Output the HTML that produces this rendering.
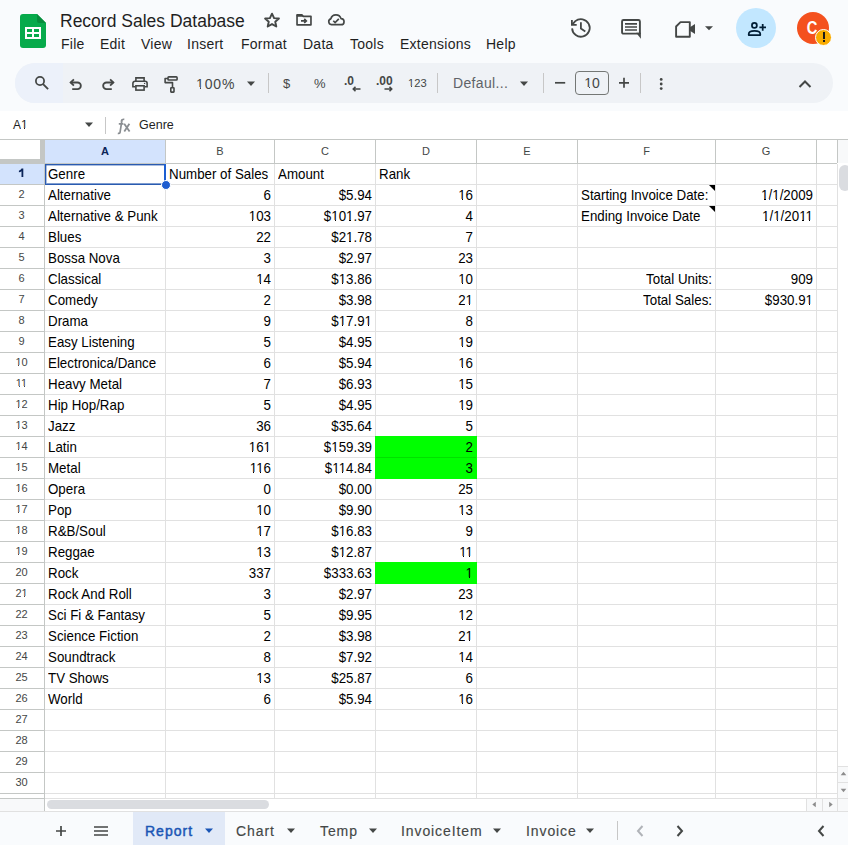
<!DOCTYPE html><html><head><meta charset="utf-8">
<style>
*{box-sizing:border-box;margin:0;padding:0}
html,body{width:848px;height:845px;overflow:hidden;background:#f9fbfd;font-family:"Liberation Sans",sans-serif;color:#1f1f1f}
.a{position:absolute}
.hl{position:absolute;height:1px}
.vl{position:absolute;width:1px}
.c{position:absolute;height:20px;line-height:21px;font-size:13.33px;color:#000;transform:scaleY(1.08);transform-origin:0 15px;white-space:nowrap;overflow:visible}
.l{padding-left:3px}
.r{text-align:right;padding-right:3px}
.ch{position:absolute;top:140px;height:23px;line-height:23px;font-size:11px;color:#444746;text-align:center}
.rh{position:absolute;left:0;width:43px;height:20px;line-height:18px;font-size:11px;color:#444746;text-align:center}
.menu{position:absolute;top:34px;font-size:14px;line-height:20px;letter-spacing:0.25px;color:#1f1f1f}
.tab{position:absolute;top:812px;height:33px;line-height:39px;font-size:14px;letter-spacing:0.9px;color:#444746;-webkit-text-stroke:0.15px #444746}
svg{position:absolute;overflow:visible}
</style></head><body>

<svg style="left:20px;top:14px" width="26" height="34" viewBox="0 0 26 34">
<path d="M3 0H17L26 9V31A3 3 0 0 1 23 34H3A3 3 0 0 1 0 31V3A3 3 0 0 1 3 0Z" fill="#07aa4b"></path>
<path d="M17 0L26 9H19A2 2 0 0 1 17 7Z" fill="#078c3c"></path>
<rect x="5" y="13" width="16" height="12" fill="#fff"></rect>
<rect x="7" y="15" width="5" height="3" fill="#07aa4b"></rect><rect x="14" y="15" width="5" height="3" fill="#07aa4b"></rect>
<rect x="7" y="20" width="5" height="3" fill="#07aa4b"></rect><rect x="14" y="20" width="5" height="3" fill="#07aa4b"></rect>
</svg>
<div class="a" style="left:60px;top:9px;font-size:17.5px;line-height:24px;color:#1f1f1f">Record Sales Database</div>

<svg style="left:262px;top:10px" width="20" height="20" viewBox="0 0 24 24"><path d="M12 4.4l2.5 5.3 5.8.55-4.4 3.9 1.25 5.7L12 16.9l-5.15 2.95 1.25-5.7-4.4-3.9 5.8-.55z" fill="none" stroke="#444746" stroke-width="2.3" stroke-linejoin="round"></path></svg>
<svg style="left:294px;top:10px" width="20" height="20" viewBox="0 0 24 24"><path d="M3.64 5.9H9.5L11.2 7.6H20.36V17.84H3.64Z" fill="none" stroke="#444746" stroke-width="2" stroke-linejoin="round"></path><path d="M3.64 5.9H9.5L11.2 7.6H3.64Z" fill="#444746" stroke="#444746" stroke-width="1"></path><path d="M8.4 13.1H14M12.3 10.6L14.8 13.1 12.3 15.6" fill="none" stroke="#444746" stroke-width="2"></path></svg>
<svg style="left:326px;top:10px" width="20" height="20" viewBox="0 0 24 24"><path d="M6.5 17.6A3.6 3.6 0 0 1 5.8 10.6A6.37 6.37 0 0 1 18 10.3A3.65 3.65 0 0 1 18 17.6Z" fill="none" stroke="#444746" stroke-width="2" stroke-linejoin="round"></path><path d="M8.76 12.9L10.9 15.1 15.4 10.6" fill="none" stroke="#444746" stroke-width="2"></path></svg>

<div class="menu" style="left:61px">File</div>
<div class="menu" style="left:100px">Edit</div>
<div class="menu" style="left:141px">View</div>
<div class="menu" style="left:187px">Insert</div>
<div class="menu" style="left:241px">Format</div>
<div class="menu" style="left:303px">Data</div>
<div class="menu" style="left:350px">Tools</div>
<div class="menu" style="left:400px">Extensions</div>
<div class="menu" style="left:486px">Help</div>
<svg style="left:566px;top:14px" width="30" height="30" viewBox="0 0 30 30"><path d="M6.1 14.4A8.8 8.8 0 1 0 9.3 7.1L6.4 10.3" fill="none" stroke="#444746" stroke-width="1.8"></path><path d="M5.9 5.9V10.9H10.7" fill="none" stroke="#444746" stroke-width="1.8"></path><path d="M14.9 8.2V14.6L19.3 17.5" fill="none" stroke="#444746" stroke-width="1.8"></path></svg>
<svg style="left:616px;top:14px" width="30" height="30" viewBox="0 0 30 30"><path d="M23.9 19.65V7.45A1.5 1.5 0 0 0 22.4 5.95H7.55A1.5 1.5 0 0 0 6.05 7.45V18.15A1.5 1.5 0 0 0 7.55 19.65H23.9" fill="none" stroke="#444746" stroke-width="1.9"></path><path d="M20.2 18.7H24.85V24.7Z" fill="#444746"></path><path d="M9 9.9H21M9 13H21M9 16H21" stroke="#444746" stroke-width="1.6"></path></svg>
<svg style="left:673px;top:17px" width="24" height="24" viewBox="0 0 24 24"><path d="M7.5 5.1H16.8V19.8H3.1V9.5Z" fill="none" stroke="#444746" stroke-width="1.9" stroke-linejoin="round"></path><path d="M16.5 10.5L22 7V17L16.5 13.5Z" fill="#444746"></path></svg>
<svg style="left:704px;top:26px" width="10" height="6" viewBox="0 0 10 6"><path d="M1 0.2h8L5 4.2z" fill="#444746"></path></svg>
<div class="a" style="left:736px;top:8px;width:40px;height:40px;border-radius:50%;background:#c2e7ff"></div>
<svg style="left:746px;top:18px" width="22" height="20" viewBox="0 0 22 20"><circle cx="8.4" cy="7.4" r="2.45" fill="none" stroke="#001d35" stroke-width="1.75"></circle><path d="M2.75 17.05V16C2.75 14 5.5 12.85 8.5 12.85S14.25 14 14.25 16V17.05Z" fill="none" stroke="#001d35" stroke-width="1.75" stroke-linejoin="round"></path><path d="M16.7 6.1V12.7M13.4 9.4H20" stroke="#001d35" stroke-width="1.75"></path></svg>
<div class="a" style="left:797px;top:12px;width:32px;height:32px;border-radius:50%;background:#f4511e"></div><div class="a" style="left:797px;top:12px;width:30px;height:32px;color:#fff;font-size:18px;font-weight:bold;line-height:32px;text-align:center;transform:scaleX(0.82)">C</div>
<div class="a" style="left:815px;top:29px;width:17px;height:17px;border-radius:50%;background:#f9ab00;border:1.5px solid #fff"></div>
<div class="a" style="left:823px;top:32px;width:2px;height:7px;background:#1a1a1a"></div>
<div class="a" style="left:823px;top:40px;width:2px;height:2px;background:#1a1a1a"></div>

<div class="a" style="left:15px;top:63px;width:818px;height:40px;border-radius:24px;background:#eff2f6"></div>
<div class="a" style="left:15px;top:63px;width:48px;height:40px;border-radius:24px 0 0 24px;background:#ecf1fa"></div>
<svg style="left:33px;top:75px" width="18" height="18" viewBox="0 0 18 18"><circle cx="7" cy="6" r="4.1" fill="none" stroke="#444746" stroke-width="1.75"></circle><path d="M10.1 9.1L15.1 14.1" stroke="#444746" stroke-width="1.9"></path></svg>
<svg style="left:68px;top:77px" width="16" height="16" viewBox="0 0 16 16"><path d="M2.6 5.5H9.5A3.35 3.35 0 0 1 9.5 12.2H4.2" fill="none" stroke="#444746" stroke-width="1.8"></path><path d="M5.9 2.3L2.6 5.5 5.9 8.7" fill="none" stroke="#444746" stroke-width="1.8"></path></svg>
<svg style="left:100px;top:77px" width="16" height="16" viewBox="0 0 16 16"><path d="M13.4 5.5H6.5A3.35 3.35 0 0 0 6.5 12.2H11.8" fill="none" stroke="#444746" stroke-width="1.8"></path><path d="M10.1 2.3L13.4 5.5 10.1 8.7" fill="none" stroke="#444746" stroke-width="1.8"></path></svg>
<svg style="left:128px;top:72px" width="24" height="24" viewBox="0 0 24 24"><path d="M7.9 9.3V5.9H16.1V9.3" fill="none" stroke="#444746" stroke-width="1.6"></path><path d="M7.3 14.8H4.9V11.3A2 2 0 0 1 6.9 9.3H17.1A2 2 0 0 1 19.1 11.3V14.8H16.7" fill="none" stroke="#444746" stroke-width="1.6"></path><rect x="7.9" y="13.8" width="8.2" height="4.3" fill="none" stroke="#444746" stroke-width="1.6"></rect><circle cx="16.6" cy="11.4" r="0.7" fill="#444746"></circle></svg>
<svg style="left:159px;top:72px" width="24" height="24" viewBox="0 0 24 24"><rect x="9" y="4.9" width="9.1" height="3.1" rx="0.8" fill="none" stroke="#444746" stroke-width="1.6"></rect><path d="M9 6.5H6.1V10.6H13.5V15" fill="none" stroke="#444746" stroke-width="1.6" stroke-linejoin="round"></path><rect x="11.8" y="15.8" width="3.2" height="4.3" rx="0.5" fill="none" stroke="#444746" stroke-width="1.6"></rect></svg>
<div class="a m1" style="left: 196px; top: 74px; font-size: 14px; line-height: 20px; letter-spacing: 0.9px; color: rgb(68, 71, 70);">100%<b style="position:absolute;left:-0.14px;top:13.45px;width:3.67px;height:1.54px;background:#eff2f6"></b><b style="position:absolute;left:4.73px;top:13.45px;width:3.15px;height:1.54px;background:#eff2f6"></b></div>
<svg style="left:246px;top:81px" width="10" height="6" viewBox="0 0 10 6"><path d="M1 0.5h8L5 5z" fill="#444746"></path></svg>
<div class="a" style="left:268px;top:73px;width:1px;height:20px;background:#c7c7c7"></div>
<div class="a" style="left:283px;top:74px;font-size:13px;line-height:20px;color:#444746">$</div>
<div class="a" style="left:314px;top:74px;font-size:13px;line-height:20px;color:#444746">%</div>
<div class="a" style="left:344px;top:71px;font-size:12px;line-height:20px;color:#444746;font-weight:bold">.0</div>
<svg style="left:352px;top:86px" width="9" height="6" viewBox="0 0 9 6"><path d="M8.5 3H1.5M3.5 0.8L1.3 3 3.5 5.2" fill="none" stroke="#444746" stroke-width="1.6"></path></svg>
<div class="a" style="left:376px;top:71px;font-size:12px;line-height:20px;color:#444746;font-weight:bold">.00</div>
<svg style="left:384px;top:86px" width="9" height="6" viewBox="0 0 9 6"><path d="M0.5 3H7.5M5.5 0.8L7.7 3 5.5 5.2" fill="none" stroke="#444746" stroke-width="1.6"></path></svg>
<div class="a m1" style="left: 408px; top: 72.5px; font-size: 11.2px; line-height: 20px; color: rgb(68, 71, 70);">123<b style="position:absolute;left:-0.11px;top:13.16px;width:2.93px;height:1.23px;background:#eff2f6"></b><b style="position:absolute;left:3.79px;top:13.16px;width:2.52px;height:1.23px;background:#eff2f6"></b></div>
<div class="a" style="left:437px;top:73px;width:1px;height:20px;background:#c7c7c7"></div>
<div class="a" style="left:453px;top:73px;font-size:14px;line-height:20px;letter-spacing:0.35px;color:#5f6368">Defaul...</div>
<svg style="left:519px;top:81px" width="10" height="6" viewBox="0 0 10 6"><path d="M1 0.5h8L5 5z" fill="#444746"></path></svg>
<div class="a" style="left:543px;top:73px;width:1px;height:20px;background:#c7c7c7"></div>
<svg style="left:553px;top:76px" width="14" height="14" viewBox="0 0 14 14"><path d="M2 6.8H12.2" stroke="#444746" stroke-width="1.7"></path></svg>
<div class="a m1" style="left: 575px; top: 71px; width: 34px; height: 24px; border: 1px solid rgb(116, 119, 117); border-radius: 4px; font-size: 14px; line-height: 22px; text-align: center; color: rgb(68, 71, 70);">10<b style="position:absolute;left:9.06px;top:15.45px;width:3.67px;height:1.54px;background:#eff2f6"></b><b style="position:absolute;left:13.94px;top:15.45px;width:3.15px;height:1.54px;background:#eff2f6"></b></div>
<svg style="left:617px;top:76px" width="14" height="14" viewBox="0 0 14 14"><path d="M2 6.8H12M7 1.8V11.8" stroke="#444746" stroke-width="1.7"></path></svg>
<div class="a" style="left:640px;top:73px;width:1px;height:20px;background:#c7c7c7"></div>
<svg style="left:656px;top:76px" width="10" height="16" viewBox="0 0 10 16"><circle cx="5.2" cy="3.4" r="1.4" fill="#444746"></circle><circle cx="5.2" cy="8" r="1.4" fill="#444746"></circle><circle cx="5.2" cy="12.6" r="1.4" fill="#444746"></circle></svg>
<svg style="left:798px;top:80px" width="14" height="8" viewBox="0 0 14 8"><path d="M1.5 7L7 1.5 12.5 7" fill="none" stroke="#444746" stroke-width="2"></path></svg>

<div class="a" style="left:0;top:111px;width:848px;height:28px;background:#fff"></div>
<div class="a m1" style="left: 13px; top: 115px; font-size: 12px; line-height: 20px; color: rgb(31, 31, 31);">A1<b style="position:absolute;left:7.88px;top:12.82px;width:3.14px;height:1.32px;background:#ffffff"></b><b style="position:absolute;left:12.06px;top:12.82px;width:2.70px;height:1.32px;background:#ffffff"></b></div>
<svg style="left:84px;top:122px" width="10" height="6" viewBox="0 0 10 6"><path d="M1 0.5h8L5 5z" fill="#444746"></path></svg>
<div class="a" style="left:105px;top:117px;width:1px;height:17px;background:#c7c7c7"></div>
<svg style="left:115px;top:118px" width="17" height="16" viewBox="0 0 17 16"><path d="M6.2 3.6C6.6 1.8 7.6 1.1 9.3 1.3M7 1.8L5 14.6C4.7 15.3 4 15.5 2.8 15.3M3.8 5.9H8.4" fill="none" stroke="#8a8e92" stroke-width="1.7"></path><path d="M9.2 5.8L14.6 13.6M14.4 5.8L9.3 13.6" fill="none" stroke="#8a8e92" stroke-width="1.8"></path></svg>
<div class="a" style="left:139px;top:115px;font-size:12.5px;line-height:20px;color:#1f1f1f">Genre</div>

<div class="a" style="left:0;top:139px;width:848px;height:672px;background:#fff"></div>
<div class="a" style="left:45px;top:140px;width:120px;height:23px;background:#d3e3fd"></div>
<div class="a" style="left:0;top:164px;width:44px;height:20px;background:#d3e3fd"></div>
<div class="hl" style="left:0;top:184px;width:44px;background:#c4c7c5"></div>
<div class="hl" style="left:45px;top:184px;width:792px;background:#e1e1e1"></div>
<div class="hl" style="left:0;top:205px;width:44px;background:#c4c7c5"></div>
<div class="hl" style="left:45px;top:205px;width:792px;background:#e1e1e1"></div>
<div class="hl" style="left:0;top:226px;width:44px;background:#c4c7c5"></div>
<div class="hl" style="left:45px;top:226px;width:792px;background:#e1e1e1"></div>
<div class="hl" style="left:0;top:247px;width:44px;background:#c4c7c5"></div>
<div class="hl" style="left:45px;top:247px;width:792px;background:#e1e1e1"></div>
<div class="hl" style="left:0;top:268px;width:44px;background:#c4c7c5"></div>
<div class="hl" style="left:45px;top:268px;width:792px;background:#e1e1e1"></div>
<div class="hl" style="left:0;top:289px;width:44px;background:#c4c7c5"></div>
<div class="hl" style="left:45px;top:289px;width:792px;background:#e1e1e1"></div>
<div class="hl" style="left:0;top:310px;width:44px;background:#c4c7c5"></div>
<div class="hl" style="left:45px;top:310px;width:792px;background:#e1e1e1"></div>
<div class="hl" style="left:0;top:331px;width:44px;background:#c4c7c5"></div>
<div class="hl" style="left:45px;top:331px;width:792px;background:#e1e1e1"></div>
<div class="hl" style="left:0;top:352px;width:44px;background:#c4c7c5"></div>
<div class="hl" style="left:45px;top:352px;width:792px;background:#e1e1e1"></div>
<div class="hl" style="left:0;top:373px;width:44px;background:#c4c7c5"></div>
<div class="hl" style="left:45px;top:373px;width:792px;background:#e1e1e1"></div>
<div class="hl" style="left:0;top:394px;width:44px;background:#c4c7c5"></div>
<div class="hl" style="left:45px;top:394px;width:792px;background:#e1e1e1"></div>
<div class="hl" style="left:0;top:415px;width:44px;background:#c4c7c5"></div>
<div class="hl" style="left:45px;top:415px;width:792px;background:#e1e1e1"></div>
<div class="hl" style="left:0;top:436px;width:44px;background:#c4c7c5"></div>
<div class="hl" style="left:45px;top:436px;width:792px;background:#e1e1e1"></div>
<div class="hl" style="left:0;top:457px;width:44px;background:#c4c7c5"></div>
<div class="hl" style="left:45px;top:457px;width:330px;background:#e1e1e1"></div>
<div class="hl" style="left:376px;top:457px;width:100px;background:#00e000"></div>
<div class="hl" style="left:477px;top:457px;width:360px;background:#e1e1e1"></div>
<div class="hl" style="left:0;top:478px;width:44px;background:#c4c7c5"></div>
<div class="hl" style="left:45px;top:478px;width:792px;background:#e1e1e1"></div>
<div class="hl" style="left:0;top:499px;width:44px;background:#c4c7c5"></div>
<div class="hl" style="left:45px;top:499px;width:792px;background:#e1e1e1"></div>
<div class="hl" style="left:0;top:520px;width:44px;background:#c4c7c5"></div>
<div class="hl" style="left:45px;top:520px;width:792px;background:#e1e1e1"></div>
<div class="hl" style="left:0;top:541px;width:44px;background:#c4c7c5"></div>
<div class="hl" style="left:45px;top:541px;width:792px;background:#e1e1e1"></div>
<div class="hl" style="left:0;top:562px;width:44px;background:#c4c7c5"></div>
<div class="hl" style="left:45px;top:562px;width:792px;background:#e1e1e1"></div>
<div class="hl" style="left:0;top:583px;width:44px;background:#c4c7c5"></div>
<div class="hl" style="left:45px;top:583px;width:792px;background:#e1e1e1"></div>
<div class="hl" style="left:0;top:604px;width:44px;background:#c4c7c5"></div>
<div class="hl" style="left:45px;top:604px;width:792px;background:#e1e1e1"></div>
<div class="hl" style="left:0;top:625px;width:44px;background:#c4c7c5"></div>
<div class="hl" style="left:45px;top:625px;width:792px;background:#e1e1e1"></div>
<div class="hl" style="left:0;top:646px;width:44px;background:#c4c7c5"></div>
<div class="hl" style="left:45px;top:646px;width:792px;background:#e1e1e1"></div>
<div class="hl" style="left:0;top:667px;width:44px;background:#c4c7c5"></div>
<div class="hl" style="left:45px;top:667px;width:792px;background:#e1e1e1"></div>
<div class="hl" style="left:0;top:688px;width:44px;background:#c4c7c5"></div>
<div class="hl" style="left:45px;top:688px;width:792px;background:#e1e1e1"></div>
<div class="hl" style="left:0;top:709px;width:44px;background:#c4c7c5"></div>
<div class="hl" style="left:45px;top:709px;width:792px;background:#e1e1e1"></div>
<div class="hl" style="left:0;top:730px;width:44px;background:#c4c7c5"></div>
<div class="hl" style="left:45px;top:730px;width:792px;background:#e1e1e1"></div>
<div class="hl" style="left:0;top:751px;width:44px;background:#c4c7c5"></div>
<div class="hl" style="left:45px;top:751px;width:792px;background:#e1e1e1"></div>
<div class="hl" style="left:0;top:772px;width:44px;background:#c4c7c5"></div>
<div class="hl" style="left:45px;top:772px;width:792px;background:#e1e1e1"></div>
<div class="hl" style="left:0;top:793px;width:44px;background:#c4c7c5"></div>
<div class="hl" style="left:45px;top:793px;width:792px;background:#e1e1e1"></div>
<div class="hl" style="left:0;top:798px;width:44px;background:#c4c7c5"></div>
<div class="hl" style="left:45px;top:798px;width:792px;background:#e1e1e1"></div>
<div class="hl" style="left:0;top:139px;width:848px;background:#c4c7c5"></div>
<div class="hl" style="left:44px;top:163px;width:793px;background:#c4c7c5"></div>
<div class="vl" style="left:44px;top:164px;height:647px;background:#c4c7c5"></div>
<div class="vl" style="left:165px;top:140px;height:23px;background:#c4c7c5"></div>
<div class="vl" style="left:165px;top:164px;height:634px;background:#e1e1e1"></div>
<div class="vl" style="left:274px;top:140px;height:23px;background:#c4c7c5"></div>
<div class="vl" style="left:274px;top:164px;height:634px;background:#e1e1e1"></div>
<div class="vl" style="left:375px;top:140px;height:23px;background:#c4c7c5"></div>
<div class="vl" style="left:375px;top:164px;height:272px;background:#e1e1e1"></div>
<div class="vl" style="left:375px;top:479px;height:83px;background:#e1e1e1"></div>
<div class="vl" style="left:375px;top:584px;height:214px;background:#e1e1e1"></div>
<div class="vl" style="left:476px;top:140px;height:23px;background:#c4c7c5"></div>
<div class="vl" style="left:476px;top:164px;height:272px;background:#e1e1e1"></div>
<div class="vl" style="left:476px;top:479px;height:83px;background:#e1e1e1"></div>
<div class="vl" style="left:476px;top:584px;height:214px;background:#e1e1e1"></div>
<div class="vl" style="left:577px;top:140px;height:23px;background:#c4c7c5"></div>
<div class="vl" style="left:577px;top:164px;height:634px;background:#e1e1e1"></div>
<div class="vl" style="left:715px;top:140px;height:23px;background:#c4c7c5"></div>
<div class="vl" style="left:715px;top:164px;height:634px;background:#e1e1e1"></div>
<div class="vl" style="left:816px;top:140px;height:23px;background:#c4c7c5"></div>
<div class="vl" style="left:816px;top:164px;height:634px;background:#e1e1e1"></div>
<div class="vl" style="left:837px;top:140px;height:23px;background:#c4c7c5"></div>
<div class="vl" style="left:837px;top:164px;height:647px;background:#e1e1e1"></div>
<div class="a" style="left:375px;top:436px;width:102px;height:43px;background:#00ff00"></div>
<div class="a" style="left:375px;top:562px;width:102px;height:22px;background:#00ff00"></div>
<div class="hl" style="left:376px;top:457px;width:100px;background:#00e000"></div>
<div class="a" style="left:40px;top:140px;width:5px;height:24px;background:#c4c7c5"></div>
<div class="a" style="left:0;top:159px;width:44px;height:5px;background:#c4c7c5"></div>
<div class="ch" style="left:45px;width:120px;color:#0b2559;font-weight:bold">A</div>
<div class="ch" style="left:166px;width:108px;">B</div>
<div class="ch" style="left:275px;width:100px;">C</div>
<div class="ch" style="left:376px;width:100px;">D</div>
<div class="ch" style="left:477px;width:100px;">E</div>
<div class="ch" style="left:578px;width:137px;">F</div>
<div class="ch" style="left:716px;width:100px;">G</div>
<svg style="left:18px;top:168px" width="7" height="10" viewBox="0 0 7 10"><path d="M3.5 0.6H5.3V8.9H3.5V3.2C2.9 3.7 1.9 4.1 0.9 4.2V2.7C2.2 2.4 3 1.6 3.5 0.6Z" fill="#0b2559"></path></svg>
<div class="rh" style="top: 185px;">2</div>
<div class="rh" style="top: 206px;">3</div>
<div class="rh" style="top: 227px;">4</div>
<div class="rh" style="top: 248px;">5</div>
<div class="rh" style="top: 269px;">6</div>
<div class="rh" style="top: 290px;">7</div>
<div class="rh" style="top: 311px;">8</div>
<div class="rh" style="top: 332px;">9</div>
<div class="rh" style="top: 353px;">10<b style="position:absolute;left:15.27px;top:12.00px;width:2.88px;height:1.21px;background:#ffffff"></b><b style="position:absolute;left:19.09px;top:12.00px;width:2.48px;height:1.21px;background:#ffffff"></b></div>
<div class="rh" style="top: 374px;">11<b style="position:absolute;left:15.67px;top:12.00px;width:2.88px;height:1.21px;background:#ffffff"></b><b style="position:absolute;left:19.50px;top:12.00px;width:2.48px;height:1.21px;background:#ffffff"></b><b style="position:absolute;left:20.97px;top:12.00px;width:2.88px;height:1.21px;background:#ffffff"></b><b style="position:absolute;left:24.80px;top:12.00px;width:2.48px;height:1.21px;background:#ffffff"></b></div>
<div class="rh" style="top: 395px;">12<b style="position:absolute;left:15.27px;top:12.00px;width:2.88px;height:1.21px;background:#ffffff"></b><b style="position:absolute;left:19.09px;top:12.00px;width:2.48px;height:1.21px;background:#ffffff"></b></div>
<div class="rh" style="top: 416px;">13<b style="position:absolute;left:15.27px;top:12.00px;width:2.88px;height:1.21px;background:#ffffff"></b><b style="position:absolute;left:19.09px;top:12.00px;width:2.48px;height:1.21px;background:#ffffff"></b></div>
<div class="rh" style="top: 437px;">14<b style="position:absolute;left:15.27px;top:12.00px;width:2.88px;height:1.21px;background:#ffffff"></b><b style="position:absolute;left:19.09px;top:12.00px;width:2.48px;height:1.21px;background:#ffffff"></b></div>
<div class="rh" style="top: 458px;">15<b style="position:absolute;left:15.27px;top:12.00px;width:2.88px;height:1.21px;background:#ffffff"></b><b style="position:absolute;left:19.09px;top:12.00px;width:2.48px;height:1.21px;background:#ffffff"></b></div>
<div class="rh" style="top: 479px;">16<b style="position:absolute;left:15.27px;top:12.00px;width:2.88px;height:1.21px;background:#ffffff"></b><b style="position:absolute;left:19.09px;top:12.00px;width:2.48px;height:1.21px;background:#ffffff"></b></div>
<div class="rh" style="top: 500px;">17<b style="position:absolute;left:15.27px;top:12.00px;width:2.88px;height:1.21px;background:#ffffff"></b><b style="position:absolute;left:19.09px;top:12.00px;width:2.48px;height:1.21px;background:#ffffff"></b></div>
<div class="rh" style="top: 521px;">18<b style="position:absolute;left:15.27px;top:12.00px;width:2.88px;height:1.21px;background:#ffffff"></b><b style="position:absolute;left:19.09px;top:12.00px;width:2.48px;height:1.21px;background:#ffffff"></b></div>
<div class="rh" style="top: 542px;">19<b style="position:absolute;left:15.27px;top:12.00px;width:2.88px;height:1.21px;background:#ffffff"></b><b style="position:absolute;left:19.09px;top:12.00px;width:2.48px;height:1.21px;background:#ffffff"></b></div>
<div class="rh" style="top: 563px;">20</div>
<div class="rh" style="top: 584px;">21<b style="position:absolute;left:21.37px;top:12.00px;width:2.88px;height:1.21px;background:#ffffff"></b><b style="position:absolute;left:25.20px;top:12.00px;width:2.48px;height:1.21px;background:#ffffff"></b></div>
<div class="rh" style="top: 605px;">22</div>
<div class="rh" style="top: 626px;">23</div>
<div class="rh" style="top: 647px;">24</div>
<div class="rh" style="top: 668px;">25</div>
<div class="rh" style="top: 689px;">26</div>
<div class="rh" style="top: 710px;">27</div>
<div class="rh" style="top: 731px;">28</div>
<div class="rh" style="top: 752px;">29</div>
<div class="rh" style="top: 773px;">30</div>
<div class="c l" style="left: 45px; top: 164px;">Genre</div>
<div class="c l" style="left: 166px; top: 164px;">Number of Sales</div>
<div class="c l" style="left: 275px; top: 164px;">Amount</div>
<div class="c l" style="left: 376px; top: 164px;">Rank</div>
<div class="c l" style="left: 45px; top: 185px;">Alternative</div>
<div class="c r" style="left: 166px; top: 185px; width: 108px;">6</div>
<div class="c r" style="left: 275px; top: 185px; width: 100px;">$5.94</div>
<div class="c r" style="left: 376px; top: 185px; width: 100px;">16<b style="position:absolute;left:82.04px;top:13.90px;width:3.49px;height:1.47px;background:#ffffff"></b><b style="position:absolute;left:86.68px;top:13.90px;width:3.00px;height:1.47px;background:#ffffff"></b></div>
<div class="c l" style="left: 45px; top: 206px;">Alternative &amp; Punk</div>
<div class="c r" style="left: 166px; top: 206px; width: 108px;">103<b style="position:absolute;left:82.62px;top:13.90px;width:3.49px;height:1.47px;background:#ffffff"></b><b style="position:absolute;left:87.26px;top:13.90px;width:3.00px;height:1.47px;background:#ffffff"></b></div>
<div class="c r" style="left: 275px; top: 206px; width: 100px;">$101.97<b style="position:absolute;left:56.09px;top:13.90px;width:3.49px;height:1.47px;background:#ffffff"></b><b style="position:absolute;left:60.72px;top:13.90px;width:3.00px;height:1.47px;background:#ffffff"></b><b style="position:absolute;left:70.91px;top:13.90px;width:3.49px;height:1.47px;background:#ffffff"></b><b style="position:absolute;left:75.55px;top:13.90px;width:3.00px;height:1.47px;background:#ffffff"></b></div>
<div class="c r" style="left: 376px; top: 206px; width: 100px;">4</div>
<div class="c l" style="left: 45px; top: 227px;">Blues</div>
<div class="c r" style="left: 166px; top: 227px; width: 108px;">22</div>
<div class="c r" style="left: 275px; top: 227px; width: 100px;">$21.78<b style="position:absolute;left:70.91px;top:13.90px;width:3.49px;height:1.47px;background:#ffffff"></b><b style="position:absolute;left:75.55px;top:13.90px;width:3.00px;height:1.47px;background:#ffffff"></b></div>
<div class="c r" style="left: 376px; top: 227px; width: 100px;">7</div>
<div class="c l" style="left: 45px; top: 248px;">Bossa Nova</div>
<div class="c r" style="left: 166px; top: 248px; width: 108px;">3</div>
<div class="c r" style="left: 275px; top: 248px; width: 100px;">$2.97</div>
<div class="c r" style="left: 376px; top: 248px; width: 100px;">23</div>
<div class="c l" style="left: 45px; top: 269px;">Classical</div>
<div class="c r" style="left: 166px; top: 269px; width: 108px;">14<b style="position:absolute;left:90.04px;top:13.90px;width:3.49px;height:1.47px;background:#ffffff"></b><b style="position:absolute;left:94.68px;top:13.90px;width:3.00px;height:1.47px;background:#ffffff"></b></div>
<div class="c r" style="left: 275px; top: 269px; width: 100px;">$13.86<b style="position:absolute;left:63.51px;top:13.90px;width:3.49px;height:1.47px;background:#ffffff"></b><b style="position:absolute;left:68.15px;top:13.90px;width:3.00px;height:1.47px;background:#ffffff"></b></div>
<div class="c r" style="left: 376px; top: 269px; width: 100px;">10<b style="position:absolute;left:82.04px;top:13.90px;width:3.49px;height:1.47px;background:#ffffff"></b><b style="position:absolute;left:86.68px;top:13.90px;width:3.00px;height:1.47px;background:#ffffff"></b></div>
<div class="c l" style="left: 45px; top: 290px;">Comedy</div>
<div class="c r" style="left: 166px; top: 290px; width: 108px;">2</div>
<div class="c r" style="left: 275px; top: 290px; width: 100px;">$3.98</div>
<div class="c r" style="left: 376px; top: 290px; width: 100px;">21<b style="position:absolute;left:89.44px;top:13.90px;width:3.49px;height:1.47px;background:#ffffff"></b><b style="position:absolute;left:94.08px;top:13.90px;width:3.00px;height:1.47px;background:#ffffff"></b></div>
<div class="c l" style="left: 45px; top: 311px;">Drama</div>
<div class="c r" style="left: 166px; top: 311px; width: 108px;">9</div>
<div class="c r" style="left: 275px; top: 311px; width: 100px;">$17.91<b style="position:absolute;left:63.51px;top:13.90px;width:3.49px;height:1.47px;background:#ffffff"></b><b style="position:absolute;left:68.15px;top:13.90px;width:3.00px;height:1.47px;background:#ffffff"></b><b style="position:absolute;left:89.44px;top:13.90px;width:3.49px;height:1.47px;background:#ffffff"></b><b style="position:absolute;left:94.08px;top:13.90px;width:3.00px;height:1.47px;background:#ffffff"></b></div>
<div class="c r" style="left: 376px; top: 311px; width: 100px;">8</div>
<div class="c l" style="left: 45px; top: 332px;">Easy Listening</div>
<div class="c r" style="left: 166px; top: 332px; width: 108px;">5</div>
<div class="c r" style="left: 275px; top: 332px; width: 100px;">$4.95</div>
<div class="c r" style="left: 376px; top: 332px; width: 100px;">19<b style="position:absolute;left:82.04px;top:13.90px;width:3.49px;height:1.47px;background:#ffffff"></b><b style="position:absolute;left:86.68px;top:13.90px;width:3.00px;height:1.47px;background:#ffffff"></b></div>
<div class="c l" style="left: 45px; top: 353px;">Electronica/Dance</div>
<div class="c r" style="left: 166px; top: 353px; width: 108px;">6</div>
<div class="c r" style="left: 275px; top: 353px; width: 100px;">$5.94</div>
<div class="c r" style="left: 376px; top: 353px; width: 100px;">16<b style="position:absolute;left:82.04px;top:13.90px;width:3.49px;height:1.47px;background:#ffffff"></b><b style="position:absolute;left:86.68px;top:13.90px;width:3.00px;height:1.47px;background:#ffffff"></b></div>
<div class="c l" style="left: 45px; top: 374px;">Heavy Metal</div>
<div class="c r" style="left: 166px; top: 374px; width: 108px;">7</div>
<div class="c r" style="left: 275px; top: 374px; width: 100px;">$6.93</div>
<div class="c r" style="left: 376px; top: 374px; width: 100px;">15<b style="position:absolute;left:82.04px;top:13.90px;width:3.49px;height:1.47px;background:#ffffff"></b><b style="position:absolute;left:86.68px;top:13.90px;width:3.00px;height:1.47px;background:#ffffff"></b></div>
<div class="c l" style="left: 45px; top: 395px;">Hip Hop/Rap</div>
<div class="c r" style="left: 166px; top: 395px; width: 108px;">5</div>
<div class="c r" style="left: 275px; top: 395px; width: 100px;">$4.95</div>
<div class="c r" style="left: 376px; top: 395px; width: 100px;">19<b style="position:absolute;left:82.04px;top:13.90px;width:3.49px;height:1.47px;background:#ffffff"></b><b style="position:absolute;left:86.68px;top:13.90px;width:3.00px;height:1.47px;background:#ffffff"></b></div>
<div class="c l" style="left: 45px; top: 416px;">Jazz</div>
<div class="c r" style="left: 166px; top: 416px; width: 108px;">36</div>
<div class="c r" style="left: 275px; top: 416px; width: 100px;">$35.64</div>
<div class="c r" style="left: 376px; top: 416px; width: 100px;">5</div>
<div class="c l" style="left: 45px; top: 437px;">Latin</div>
<div class="c r" style="left: 166px; top: 437px; width: 108px;">161<b style="position:absolute;left:82.62px;top:13.90px;width:3.49px;height:1.47px;background:#ffffff"></b><b style="position:absolute;left:87.26px;top:13.90px;width:3.00px;height:1.47px;background:#ffffff"></b><b style="position:absolute;left:97.43px;top:13.90px;width:3.49px;height:1.47px;background:#ffffff"></b><b style="position:absolute;left:102.07px;top:13.90px;width:3.00px;height:1.47px;background:#ffffff"></b></div>
<div class="c r" style="left: 275px; top: 437px; width: 100px;">$159.39<b style="position:absolute;left:56.09px;top:13.90px;width:3.49px;height:1.47px;background:#ffffff"></b><b style="position:absolute;left:60.72px;top:13.90px;width:3.00px;height:1.47px;background:#ffffff"></b></div>
<div class="c r" style="left: 376px; top: 437px; width: 100px;">2</div>
<div class="c l" style="left: 45px; top: 458px;">Metal</div>
<div class="c r" style="left: 166px; top: 458px; width: 108px;">116<b style="position:absolute;left:83.62px;top:13.90px;width:3.49px;height:1.47px;background:#ffffff"></b><b style="position:absolute;left:88.26px;top:13.90px;width:3.00px;height:1.47px;background:#ffffff"></b><b style="position:absolute;left:90.04px;top:13.90px;width:3.49px;height:1.47px;background:#ffffff"></b><b style="position:absolute;left:94.68px;top:13.90px;width:3.00px;height:1.47px;background:#ffffff"></b></div>
<div class="c r" style="left: 275px; top: 458px; width: 100px;">$114.84<b style="position:absolute;left:57.07px;top:13.90px;width:3.49px;height:1.47px;background:#ffffff"></b><b style="position:absolute;left:61.71px;top:13.90px;width:3.00px;height:1.47px;background:#ffffff"></b><b style="position:absolute;left:63.49px;top:13.90px;width:3.49px;height:1.47px;background:#ffffff"></b><b style="position:absolute;left:68.13px;top:13.90px;width:3.00px;height:1.47px;background:#ffffff"></b></div>
<div class="c r" style="left: 376px; top: 458px; width: 100px;">3</div>
<div class="c l" style="left: 45px; top: 479px;">Opera</div>
<div class="c r" style="left: 166px; top: 479px; width: 108px;">0</div>
<div class="c r" style="left: 275px; top: 479px; width: 100px;">$0.00</div>
<div class="c r" style="left: 376px; top: 479px; width: 100px;">25</div>
<div class="c l" style="left: 45px; top: 500px;">Pop</div>
<div class="c r" style="left: 166px; top: 500px; width: 108px;">10<b style="position:absolute;left:90.04px;top:13.90px;width:3.49px;height:1.47px;background:#ffffff"></b><b style="position:absolute;left:94.68px;top:13.90px;width:3.00px;height:1.47px;background:#ffffff"></b></div>
<div class="c r" style="left: 275px; top: 500px; width: 100px;">$9.90</div>
<div class="c r" style="left: 376px; top: 500px; width: 100px;">13<b style="position:absolute;left:82.04px;top:13.90px;width:3.49px;height:1.47px;background:#ffffff"></b><b style="position:absolute;left:86.68px;top:13.90px;width:3.00px;height:1.47px;background:#ffffff"></b></div>
<div class="c l" style="left: 45px; top: 521px;">R&amp;B/Soul</div>
<div class="c r" style="left: 166px; top: 521px; width: 108px;">17<b style="position:absolute;left:90.04px;top:13.90px;width:3.49px;height:1.47px;background:#ffffff"></b><b style="position:absolute;left:94.68px;top:13.90px;width:3.00px;height:1.47px;background:#ffffff"></b></div>
<div class="c r" style="left: 275px; top: 521px; width: 100px;">$16.83<b style="position:absolute;left:63.51px;top:13.90px;width:3.49px;height:1.47px;background:#ffffff"></b><b style="position:absolute;left:68.15px;top:13.90px;width:3.00px;height:1.47px;background:#ffffff"></b></div>
<div class="c r" style="left: 376px; top: 521px; width: 100px;">9</div>
<div class="c l" style="left: 45px; top: 542px;">Reggae</div>
<div class="c r" style="left: 166px; top: 542px; width: 108px;">13<b style="position:absolute;left:90.04px;top:13.90px;width:3.49px;height:1.47px;background:#ffffff"></b><b style="position:absolute;left:94.68px;top:13.90px;width:3.00px;height:1.47px;background:#ffffff"></b></div>
<div class="c r" style="left: 275px; top: 542px; width: 100px;">$12.87<b style="position:absolute;left:63.51px;top:13.90px;width:3.49px;height:1.47px;background:#ffffff"></b><b style="position:absolute;left:68.15px;top:13.90px;width:3.00px;height:1.47px;background:#ffffff"></b></div>
<div class="c r" style="left: 376px; top: 542px; width: 100px;">11<b style="position:absolute;left:83.02px;top:13.90px;width:3.49px;height:1.47px;background:#ffffff"></b><b style="position:absolute;left:87.66px;top:13.90px;width:3.00px;height:1.47px;background:#ffffff"></b><b style="position:absolute;left:89.44px;top:13.90px;width:3.49px;height:1.47px;background:#ffffff"></b><b style="position:absolute;left:94.08px;top:13.90px;width:3.00px;height:1.47px;background:#ffffff"></b></div>
<div class="c l" style="left: 45px; top: 563px;">Rock</div>
<div class="c r" style="left: 166px; top: 563px; width: 108px;">337</div>
<div class="c r" style="left: 275px; top: 563px; width: 100px;">$333.63</div>
<div class="c r" style="left: 376px; top: 563px; width: 100px;">1<b style="position:absolute;left:89.44px;top:13.90px;width:3.49px;height:1.47px;background:#00ff00"></b><b style="position:absolute;left:94.08px;top:13.90px;width:3.00px;height:1.47px;background:#00ff00"></b></div>
<div class="c l" style="left: 45px; top: 584px;">Rock And Roll</div>
<div class="c r" style="left: 166px; top: 584px; width: 108px;">3</div>
<div class="c r" style="left: 275px; top: 584px; width: 100px;">$2.97</div>
<div class="c r" style="left: 376px; top: 584px; width: 100px;">23</div>
<div class="c l" style="left: 45px; top: 605px;">Sci Fi &amp; Fantasy</div>
<div class="c r" style="left: 166px; top: 605px; width: 108px;">5</div>
<div class="c r" style="left: 275px; top: 605px; width: 100px;">$9.95</div>
<div class="c r" style="left: 376px; top: 605px; width: 100px;">12<b style="position:absolute;left:82.04px;top:13.90px;width:3.49px;height:1.47px;background:#ffffff"></b><b style="position:absolute;left:86.68px;top:13.90px;width:3.00px;height:1.47px;background:#ffffff"></b></div>
<div class="c l" style="left: 45px; top: 626px;">Science Fiction</div>
<div class="c r" style="left: 166px; top: 626px; width: 108px;">2</div>
<div class="c r" style="left: 275px; top: 626px; width: 100px;">$3.98</div>
<div class="c r" style="left: 376px; top: 626px; width: 100px;">21<b style="position:absolute;left:89.44px;top:13.90px;width:3.49px;height:1.47px;background:#ffffff"></b><b style="position:absolute;left:94.08px;top:13.90px;width:3.00px;height:1.47px;background:#ffffff"></b></div>
<div class="c l" style="left: 45px; top: 647px;">Soundtrack</div>
<div class="c r" style="left: 166px; top: 647px; width: 108px;">8</div>
<div class="c r" style="left: 275px; top: 647px; width: 100px;">$7.92</div>
<div class="c r" style="left: 376px; top: 647px; width: 100px;">14<b style="position:absolute;left:82.04px;top:13.90px;width:3.49px;height:1.47px;background:#ffffff"></b><b style="position:absolute;left:86.68px;top:13.90px;width:3.00px;height:1.47px;background:#ffffff"></b></div>
<div class="c l" style="left: 45px; top: 668px;">TV Shows</div>
<div class="c r" style="left: 166px; top: 668px; width: 108px;">13<b style="position:absolute;left:90.04px;top:13.90px;width:3.49px;height:1.47px;background:#ffffff"></b><b style="position:absolute;left:94.68px;top:13.90px;width:3.00px;height:1.47px;background:#ffffff"></b></div>
<div class="c r" style="left: 275px; top: 668px; width: 100px;">$25.87</div>
<div class="c r" style="left: 376px; top: 668px; width: 100px;">6</div>
<div class="c l" style="left: 45px; top: 689px;">World</div>
<div class="c r" style="left: 166px; top: 689px; width: 108px;">6</div>
<div class="c r" style="left: 275px; top: 689px; width: 100px;">$5.94</div>
<div class="c r" style="left: 376px; top: 689px; width: 100px;">16<b style="position:absolute;left:82.04px;top:13.90px;width:3.49px;height:1.47px;background:#ffffff"></b><b style="position:absolute;left:86.68px;top:13.90px;width:3.00px;height:1.47px;background:#ffffff"></b></div>
<div class="c l" style="left: 578px; top: 185px;">Starting Invoice Date:</div>
<div class="c r" style="left: 716px; top: 185px; width: 100px;">1/1/2009<b style="position:absolute;left:44.98px;top:13.90px;width:3.49px;height:1.47px;background:#ffffff"></b><b style="position:absolute;left:49.61px;top:13.90px;width:3.00px;height:1.47px;background:#ffffff"></b><b style="position:absolute;left:56.09px;top:13.90px;width:3.49px;height:1.47px;background:#ffffff"></b><b style="position:absolute;left:60.72px;top:13.90px;width:3.00px;height:1.47px;background:#ffffff"></b></div>
<div class="c l" style="left: 578px; top: 206px;">Ending Invoice Date</div>
<div class="c r" style="left: 716px; top: 206px; width: 100px;">1/1/2011<b style="position:absolute;left:45.96px;top:13.90px;width:3.49px;height:1.47px;background:#ffffff"></b><b style="position:absolute;left:50.60px;top:13.90px;width:3.00px;height:1.47px;background:#ffffff"></b><b style="position:absolute;left:57.07px;top:13.90px;width:3.49px;height:1.47px;background:#ffffff"></b><b style="position:absolute;left:61.71px;top:13.90px;width:3.00px;height:1.47px;background:#ffffff"></b><b style="position:absolute;left:83.01px;top:13.90px;width:3.49px;height:1.47px;background:#ffffff"></b><b style="position:absolute;left:87.65px;top:13.90px;width:3.00px;height:1.47px;background:#ffffff"></b><b style="position:absolute;left:89.43px;top:13.90px;width:3.49px;height:1.47px;background:#ffffff"></b><b style="position:absolute;left:94.07px;top:13.90px;width:3.00px;height:1.47px;background:#ffffff"></b></div>
<div class="c r" style="left: 578px; top: 269px; width: 137px;">Total Units:</div>
<div class="c r" style="left: 716px; top: 269px; width: 100px;">909</div>
<div class="c r" style="left: 578px; top: 290px; width: 137px;">Total Sales:</div>
<div class="c r" style="left: 716px; top: 290px; width: 100px;">$930.91<b style="position:absolute;left:89.43px;top:13.90px;width:3.49px;height:1.47px;background:#ffffff"></b><b style="position:absolute;left:94.07px;top:13.90px;width:3.00px;height:1.47px;background:#ffffff"></b></div>
<svg style="left:709px;top:185px" width="6" height="6" viewBox="0 0 6 6"><path d="M0 0H6V6Z" fill="#000"></path></svg>
<svg style="left:709px;top:206px" width="6" height="6" viewBox="0 0 6 6"><path d="M0 0H6V6Z" fill="#000"></path></svg>
<div class="a" style="left:45px;top:164px;width:121px;height:1px;background:#2a5bb0"></div>
<div class="a" style="left:46px;top:165px;width:119px;height:1px;background:rgba(42,91,176,0.4)"></div>
<div class="a" style="left:45px;top:164px;width:1px;height:21px;background:#2a5bb0"></div>
<div class="a" style="left:46px;top:165px;width:1px;height:18px;background:rgba(42,91,176,0.4)"></div>
<div class="a" style="left:164px;top:164px;width:2px;height:21px;background:#1d5fd2"></div>
<div class="a" style="left:45px;top:184px;width:121px;height:1px;background:#2a5bb0"></div>
<div class="a" style="left:46px;top:183px;width:118px;height:1px;background:rgba(42,91,176,0.6)"></div>
<div class="a" style="left:161px;top:180px;width:8px;height:8px;border-radius:50%;background:#1d5cd0;border:1px solid #fff;box-sizing:content-box"></div>
<div class="a" style="left:0;top:799px;width:44px;height:12px;background:#f8f9fa"></div>
<div class="a" style="left:47px;top:800px;width:222px;height:9px;border-radius:5px;background:#dadce0"></div>
<div class="vl" style="left:806px;top:799px;height:12px;background:#e1e1e1"></div>
<div class="vl" style="left:822px;top:799px;height:12px;background:#e1e1e1"></div>
<div class="a" style="left:807px;top:799px;width:15px;height:12px;background:#f8f9fa"></div>
<div class="a" style="left:823px;top:799px;width:14px;height:12px;background:#f8f9fa"></div>
<svg style="left:811px;top:801px" width="6" height="7" viewBox="0 0 6 7"><path d="M4.8 0.7V6.3L1.3 3.5z" fill="#8c8c8c"></path></svg>
<svg style="left:828px;top:801px" width="6" height="7" viewBox="0 0 6 7"><path d="M1.2 0.7V6.3L4.7 3.5z" fill="#8c8c8c"></path></svg>
<div class="a" style="left:838px;top:140px;width:10px;height:23px;background:#f8f9fa"></div>
<div class="a" style="left:839px;top:165px;width:12px;height:26px;border-radius:6px;background:#dadce0"></div>
<div class="hl" style="left:838px;top:766px;width:10px;background:#e1e1e1"></div>
<div class="hl" style="left:838px;top:782px;width:10px;background:#e1e1e1"></div>
<div class="a" style="left:838px;top:767px;width:10px;height:15px;background:#f8f9fa"></div>
<div class="a" style="left:838px;top:783px;width:10px;height:15px;background:#f8f9fa"></div>
<svg style="left:840px;top:771px" width="7" height="5" viewBox="0 0 7 5"><path d="M0.7 4.3H6.3L3.5 0.8z" fill="#8c8c8c"></path></svg>
<svg style="left:840px;top:788px" width="7" height="5" viewBox="0 0 7 5"><path d="M0.7 0.7H6.3L3.5 4.2z" fill="#8c8c8c"></path></svg>
<div class="hl" style="left:838px;top:798px;width:10px;background:#e1e1e1"></div>
<div class="a" style="left:838px;top:799px;width:10px;height:12px;background:#f8f9fa"></div>
<div class="hl" style="left:0;top:811px;width:848px;background:#e1e1e1"></div>
<svg style="left:54px;top:824px" width="14" height="14" viewBox="0 0 14 14"><path d="M7 2v10M2 7h10" stroke="#444746" stroke-width="1.7"></path></svg>
<svg style="left:93px;top:825px" width="16" height="12" viewBox="0 0 16 12"><path d="M1 2h14M1 6h14M1 10h14" stroke="#444746" stroke-width="1.6"></path></svg>
<div class="a" style="left:133px;top:812px;width:92px;height:33px;background:#e1e9f7"></div>
<div class="tab" style="left:145px;color:#1a55b5;-webkit-text-stroke:0.45px #1a55b5;font-size:14px;letter-spacing:1.0px">Report</div>
<svg style="left:204px;top:828px" width="10" height="6" viewBox="0 0 10 6"><path d="M1 0.5h8L5 5z" fill="#1a55b5"></path></svg>
<div class="tab" style="left:236px">Chart</div>
<svg style="left:286px;top:828px" width="10" height="6" viewBox="0 0 10 6"><path d="M1 0.5h8L5 5z" fill="#444746"></path></svg>
<div class="tab" style="left:320px">Temp</div>
<svg style="left:368px;top:828px" width="10" height="6" viewBox="0 0 10 6"><path d="M1 0.5h8L5 5z" fill="#444746"></path></svg>
<div class="tab" style="left:401px">InvoiceItem</div>
<svg style="left:492px;top:828px" width="10" height="6" viewBox="0 0 10 6"><path d="M1 0.5h8L5 5z" fill="#444746"></path></svg>
<div class="tab" style="left:526px">Invoice</div>
<svg style="left:585px;top:828px" width="10" height="6" viewBox="0 0 10 6"><path d="M1 0.5h8L5 5z" fill="#444746"></path></svg>
<div class="a" style="left:617px;top:821px;width:1px;height:19px;background:#c7c7c7"></div>
<svg style="left:636px;top:825px" width="8" height="12" viewBox="0 0 8 12"><path d="M6.5 1L2 6l4.5 5" fill="none" stroke="#b0b3b8" stroke-width="2"></path></svg>
<svg style="left:676px;top:825px" width="8" height="12" viewBox="0 0 8 12"><path d="M1.5 1L6 6l-4.5 5" fill="none" stroke="#444746" stroke-width="2"></path></svg>
<svg style="left:817px;top:825px" width="8" height="12" viewBox="0 0 8 12"><path d="M6.5 1L2 6l4.5 5" fill="none" stroke="#444746" stroke-width="2"></path></svg>

</body></html>
